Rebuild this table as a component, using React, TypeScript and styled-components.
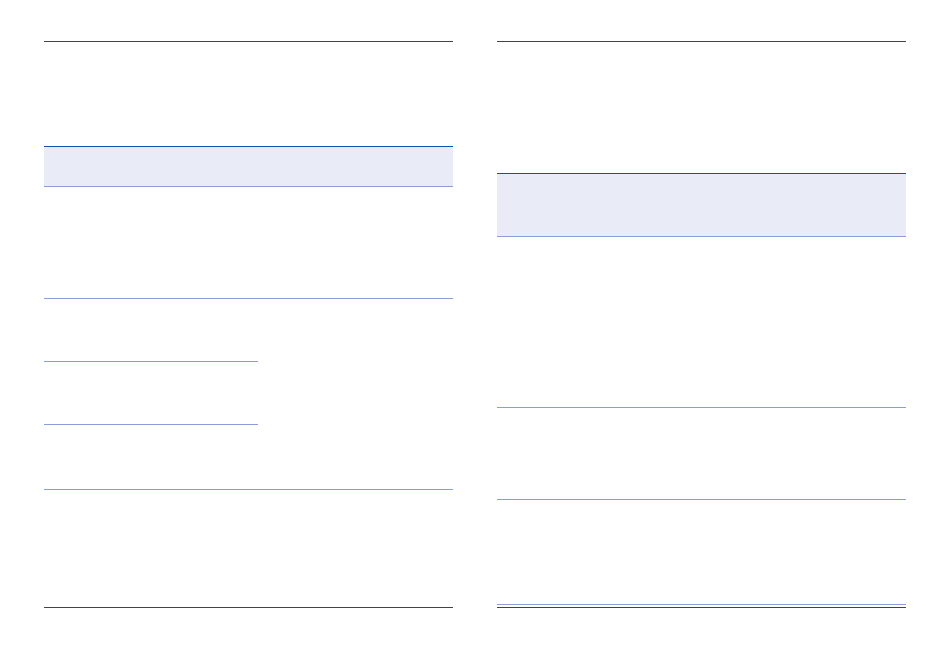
import React from "react";
import styled, { createGlobalStyle } from "styled-components";

const Global = createGlobalStyle`
  html, body { margin: 0; padding: 0; background: #ffffff; }
  body { font-family: "Liberation Serif", serif; width: 950px; height: 648px; overflow: hidden; }
`;

const Page = styled.div`
  display: grid;
  grid-template-columns: 409px 409px;
  column-gap: 44px;
  padding: 41px 0 0 44px;
`;

const Panel = styled.section`
  display: flex;
  flex-direction: column;
`;

const Rule = styled.div<{ $gap?: number }>`
  height: 1px;
  background: #434343;
  margin-top: ${(p) => p.$gap ?? 0}px;
`;

const Caption = styled.div<{ $h: number }>`
  height: ${(p) => p.$h}px;
`;

const Table = styled.div<{ $cols: string; $rows: string }>`
  display: grid;
  grid-template-columns: ${(p) => p.$cols};
  grid-template-rows: ${(p) => p.$rows};
`;

const HeadCell = styled.div`
  background: #e9ecf7;
  border-top: 1px solid #0a55ad;
  border-bottom: 1px solid #8a9edb;
`;

const Cell = styled.div<{ $line?: boolean; $span?: string; $col?: string }>`
  border-bottom: ${(p) => (p.$line ? "1px solid #8a9edb" : "none")};
  ${(p) => (p.$span ? `grid-row: ${p.$span};` : "")}
  ${(p) => (p.$col ? `grid-column: ${p.$col};` : "")}
`;

export default function App() {
  return (
    <>
      <Global />
      <Page>
        <Panel>
          <Rule />
          <Caption $h={104} />
          <Table $cols="214px 195px" $rows="41px 112px 63px 63px 65px 117px">
            <HeadCell />
            <HeadCell />
            <Cell $line />
            <Cell $line />
            <Cell $line $col="1" />
            <Cell $line $col="2" $span="3 / 6" />
            <Cell $line $col="1" />
            <Cell $line $col="1" />
            <Cell />
            <Cell />
          </Table>
          <Rule />
        </Panel>
        <Panel>
          <Rule />
          <Caption $h={131} />
          <Table $cols="85px 102px 222px" $rows="64px 171px 92px 105px">
            <HeadCell />
            <HeadCell />
            <HeadCell />
            <Cell $line />
            <Cell $line />
            <Cell $line />
            <Cell $line />
            <Cell $line />
            <Cell $line />
            <Cell $line />
            <Cell $line />
            <Cell $line />
          </Table>
          <Rule $gap={2} />
        </Panel>
      </Page>
    </>
  );
}
